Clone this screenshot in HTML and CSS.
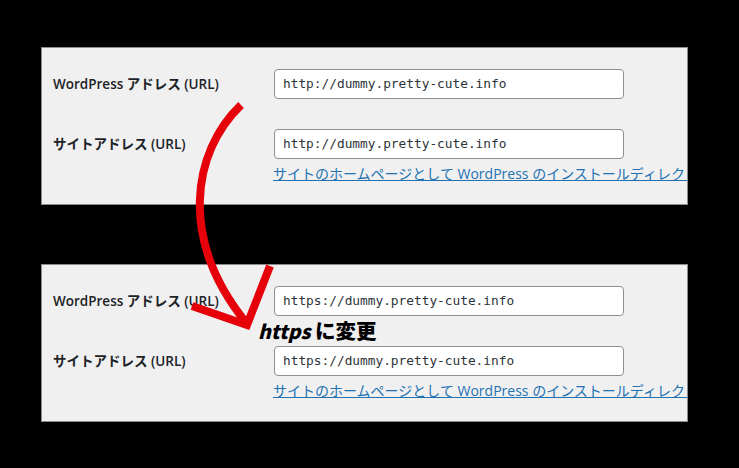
FILE: index.html
```html
<!DOCTYPE html>
<html lang="ja">
<head>
<meta charset="utf-8">
<title>WordPress URL</title>
<link rel="stylesheet" href="styles.css">
</head>
<body>
<main class="stage">
  <section class="panel">
    <div class="row">
      <label class="label">WordPress アドレス (URL)</label>
      <div class="field"><input class="input" type="text" value="http://dummy.pretty-cute.info"></div>
    </div>
    <div class="row">
      <label class="label">サイトアドレス (URL)</label>
      <div class="field">
        <input class="input" type="text" value="http://dummy.pretty-cute.info">
        <a class="link" href="#">サイトのホームページとして WordPress のインストールディレクトリとは異なる場所を設定する</a>
      </div>
    </div>
  </section>
  <section class="panel">
    <div class="row">
      <label class="label">WordPress アドレス (URL)</label>
      <div class="field"><input class="input" type="text" value="https://dummy.pretty-cute.info"></div>
    </div>
    <div class="row">
      <label class="label">サイトアドレス (URL)</label>
      <div class="field">
        <input class="input" type="text" value="https://dummy.pretty-cute.info">
        <a class="link" href="#">サイトのホームページとして WordPress のインストールディレクトリとは異なる場所を設定する</a>
      </div>
    </div>
  </section>
  <svg class="arrow" width="739" height="468" viewBox="0 0 739 468" aria-hidden="true">
    <path d="M241 105 C192 152 178 240 248 325" />
    <path d="M270 266 L247 325 L192 306" />
  </svg>
  <div class="note"><span class="note-latin">https</span> に変更</div>
</main>
</body>
</html>
```

FILE: styles.css
```css
* { box-sizing: border-box; }
html, body { margin: 0; padding: 0; background: #000; }
.stage {
  position: relative;
  width: 739px;
  height: 468px;
  padding: 47px 51px 0 41px;
  display: flex;
  flex-direction: column;
  gap: 59px;
  overflow: hidden;
}
.panel {
  height: 158px;
  padding: 21px 0 0 11px;
  background: #f0f0f1;
  border: 1px solid #8c8c8c;
  display: flex;
  flex-direction: column;
  gap: 30px;
  overflow: hidden;
  font-family: "Open Sans", "Noto Sans CJK JP", sans-serif;
  font-size: 14px;
  color: #1d2327;
}
.row { display: flex; align-items: flex-start; height: 30px; }
.label {
  width: 221px;
  flex: none;
  font-weight: 600;
  line-height: 30px;
  font-size: 13.5px;
}
.field { flex: none; width: 420px; }
.input {
  display: block;
  width: 350px;
  height: 30px;
  padding: 0 8px 2px;
  border: 1px solid #8c8f94;
  border-radius: 4px;
  background: #fff;
  color: #2c3338;
  font-family: "DejaVu Sans Mono", monospace;
  font-size: 12.8px;
}
.link {
  display: block;
  margin: 6px 0 0 -1px;
  white-space: nowrap;
  color: #2271b1;
  line-height: 18px;
  font-size: 14px;
}
.arrow {
  position: absolute;
  left: 0;
  top: 0;
  fill: none;
  stroke: #e60009;
  stroke-width: 8;
}
.note {
  position: absolute;
  left: 258px;
  top: 317px;
  color: #000;
  font-family: "Noto Sans CJK JP", sans-serif;
  font-weight: 900;
  font-size: 20.5px;
  line-height: 26px;
  white-space: nowrap;
}
.note-latin { font-style: italic; font-size: 19.5px; }
```
